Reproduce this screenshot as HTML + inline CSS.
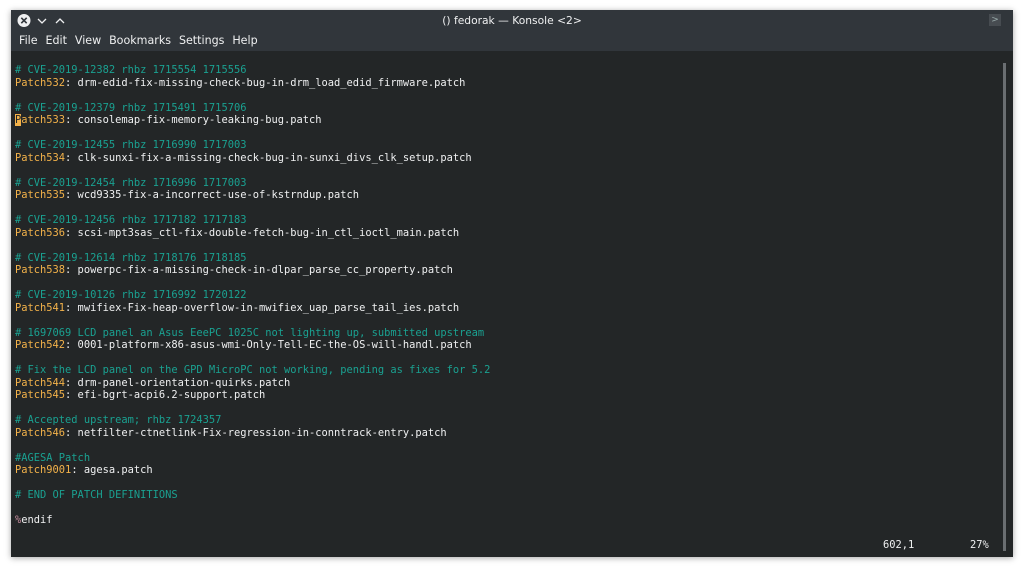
<!DOCTYPE html>
<html><head><meta charset="utf-8"><style>
body{margin:0;width:1024px;height:569px;background:#fff;position:relative;overflow:hidden;font-family:"DejaVu Sans",sans-serif}
.win{position:absolute;left:11px;top:10px;width:1002px;height:547px;background:#31363b;box-shadow:0 1px 6px rgba(0,0,0,.35)}
.title{position:absolute;left:0;top:0;width:100%;height:20px;text-align:center;color:#eff0f1;font-size:10.7px;line-height:21px}
.menu{position:absolute;left:8px;top:24px;color:#eff0f1;font-size:11.1px}
.menu span{margin-right:7.9px}
.term{position:absolute;left:0;top:41px;width:1002px;height:506px;background:#232627}
pre{position:absolute;left:4px;top:13px;margin:0;font-family:"DejaVu Sans Mono","Liberation Mono",monospace;font-size:10.4px;line-height:12.5px;color:#eff0f1}
.c{color:#1aa191}.o{color:#f3b24a}.p{color:#c88fa0}
.cur{background:#f3b24a;color:#232627}
.sb{position:absolute;left:992px;top:12px;width:3px;height:488px;background:#6a6e71}
.st{position:absolute;top:488px;font-family:"DejaVu Sans Mono",monospace;font-size:10.4px;color:#eff0f1;line-height:12.5px}
</style></head><body>
<div class="win">
<svg style="position:absolute;left:6px;top:3px" width="60" height="16">
<circle cx="7" cy="7.5" r="6.5" fill="#eff0f1"/><path d="M4.3 4.8l5.4 5.4M9.7 4.8l-5.4 5.4" stroke="#31363b" stroke-width="1.6"/>
<path d="M21 6l4 4 4-4" stroke="#eff0f1" stroke-width="1.3" fill="none"/>
<path d="M39 10l4-4 4 4" stroke="#eff0f1" stroke-width="1.3" fill="none"/></svg>
<div class="title">() fedorak — Konsole &lt;2&gt;</div>
<div style="position:absolute;left:978px;top:4px;width:12px;height:12px;background:#474c51;color:#9aa;font-size:9px;line-height:12px;text-align:center">&gt;</div>
<div class="menu"><span>File</span><span>Edit</span><span>View</span><span>Bookmarks</span><span>Settings</span><span>Help</span></div>
<div class="term">
<pre><span class="c"># CVE-2019-12382 rhbz 1715554 1715556</span>
<span class="o">Patch532</span>: drm-edid-fix-missing-check-bug-in-drm_load_edid_firmware.patch

<span class="c"># CVE-2019-12379 rhbz 1715491 1715706</span>
<span class="cur">P</span><span class="o">atch533</span>: consolemap-fix-memory-leaking-bug.patch

<span class="c"># CVE-2019-12455 rhbz 1716990 1717003</span>
<span class="o">Patch534</span>: clk-sunxi-fix-a-missing-check-bug-in-sunxi_divs_clk_setup.patch

<span class="c"># CVE-2019-12454 rhbz 1716996 1717003</span>
<span class="o">Patch535</span>: wcd9335-fix-a-incorrect-use-of-kstrndup.patch

<span class="c"># CVE-2019-12456 rhbz 1717182 1717183</span>
<span class="o">Patch536</span>: scsi-mpt3sas_ctl-fix-double-fetch-bug-in_ctl_ioctl_main.patch

<span class="c"># CVE-2019-12614 rhbz 1718176 1718185</span>
<span class="o">Patch538</span>: powerpc-fix-a-missing-check-in-dlpar_parse_cc_property.patch

<span class="c"># CVE-2019-10126 rhbz 1716992 1720122</span>
<span class="o">Patch541</span>: mwifiex-Fix-heap-overflow-in-mwifiex_uap_parse_tail_ies.patch

<span class="c"># 1697069 LCD panel an Asus EeePC 1025C not lighting up, submitted upstream</span>
<span class="o">Patch542</span>: 0001-platform-x86-asus-wmi-Only-Tell-EC-the-OS-will-handl.patch

<span class="c"># Fix the LCD panel on the GPD MicroPC not working, pending as fixes for 5.2</span>
<span class="o">Patch544</span>: drm-panel-orientation-quirks.patch
<span class="o">Patch545</span>: efi-bgrt-acpi6.2-support.patch

<span class="c"># Accepted upstream; rhbz 1724357</span>
<span class="o">Patch546</span>: netfilter-ctnetlink-Fix-regression-in-conntrack-entry.patch

<span class="c">#AGESA Patch</span>
<span class="o">Patch9001</span>: agesa.patch

<span class="c"># END OF PATCH DEFINITIONS</span>

<span class="p">%</span>endif</pre>
<div class="st" style="left:872px">602,1</div>
<div class="st" style="left:959px">27%</div>
<div class="sb"></div>
</div></div>
</body></html>
